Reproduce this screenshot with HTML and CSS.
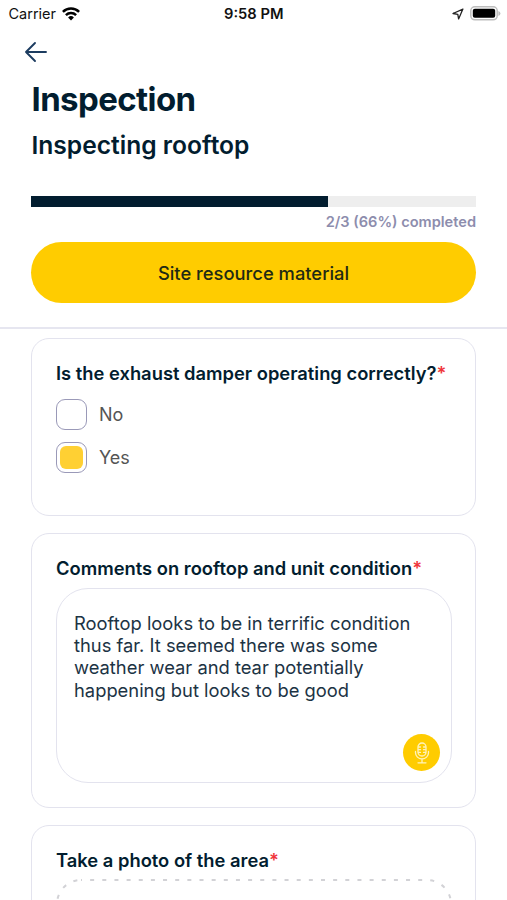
FILE: index.html
```html
<!DOCTYPE html>
<html lang="en">
<head>
  <meta charset="UTF-8" />
  <meta name="viewport" content="width=device-width, initial-scale=1.0" />
  <title>Inspection</title>
  <link rel="stylesheet" href="styles.css">
</head>
<body>
  <div class="status-bar">
    <div class="carrier">
      <span>Carrier</span>
      <svg width="18" height="14" viewBox="0 0 18 14" fill="none" stroke="#000" stroke-width="2.5">
        <path d="M0.9 4.9a11.5 11.5 0 0 1 16.2 0"/>
        <path d="M3.9 8.1a7.3 7.3 0 0 1 10.2 0"/>
        <path d="M9 13.6l-2.9-3.1a4.2 4.2 0 0 1 5.8 0z" fill="#000" stroke="none"/>
      </svg>
    </div>
    <div class="time">9:58 PM</div>
    <div class="indicators">
      <svg width="12" height="12" viewBox="0 0 12 12" fill="none" stroke="#222" stroke-width="1.3" stroke-linejoin="round">
        <path d="M10.9 1.1L1 5.5l4.8.8.8 4.6z"/>
      </svg>
      <svg width="31" height="15" viewBox="0 0 31 15">
        <rect x="0.8" y="0.8" width="26.4" height="13" rx="4" fill="#fff" stroke="#bdbdbd" stroke-width="1.5"/>
        <rect x="2.8" y="2.8" width="22.4" height="9" rx="2" fill="#000"/>
        <path d="M28.4 5v5q2-.8 2-2.5t-2-2.5z" fill="#bdbdbd"/>
      </svg>
    </div>
  </div>

  <header class="header">
    <a class="back" href="#" aria-label="Back">
      <svg width="24" height="22" viewBox="0 0 24 22" fill="none" stroke="#1c3c60" stroke-width="1.9" stroke-linecap="round" stroke-linejoin="round">
        <path d="M22 11H2M11 2L2 11l9 9"/>
      </svg>
    </a>
    <h1>Inspection</h1>
    <h2>Inspecting rooftop</h2>
    <div class="progress"><div class="progress-fill" style="width: 66.7%"></div></div>
    <p class="progress-text">2/3 (66%) completed</p>
    <button class="resource-btn" type="button">Site resource material</button>
  </header>

  <main class="questions">
    <section class="card card-choice">
      <h3>Is the exhaust damper operating correctly?<span class="required">*</span></h3>
      <div class="option"><span class="box"></span>No</div>
      <div class="option"><span class="box checked"></span>Yes</div>
    </section>

    <section class="card card-comments">
      <h3>Comments on rooftop and unit condition<span class="required">*</span></h3>
      <div class="comment">
        <p>Rooftop looks to be in terrific condition<br>thus far. It seemed there was some<br>weather wear and tear potentially<br>happening but looks to be good</p>
        <button class="mic" type="button" aria-label="Dictate">
          <svg width="16" height="22" viewBox="0 0 16 22" fill="none" stroke="#fff3bd" stroke-width="1.3" stroke-linecap="round">
            <rect x="4" y="1" width="8" height="13" rx="4"/>
            <path d="M1.5 9.5v1.2a6.5 6.3 0 0 0 13 0V9.5M8 17v3.5M4 20.8h8"/>
            <path d="M4.5 5h2M9.5 5h2M4.5 7.7h2M9.5 7.7h2M4.5 10.4h2M9.5 10.4h2"/>
          </svg>
        </button>
      </div>
    </section>

    <section class="card card-photo">
      <h3>Take a photo of the area<span class="required">*</span></h3>
      <svg class="dropzone" width="396" height="160" viewBox="0 0 396 160" fill="none">
        <rect x="1" y="1" width="394" height="158" rx="24" stroke="#d2d2d6" stroke-width="2" stroke-dasharray="4 8.15" stroke-dashoffset="3"/>
      </svg>
    </section>
  </main>
</body>
</html>
```
FILE: styles.css
```css
* {
  box-sizing: border-box;
}
body {
  margin: 0;
  height: 900px;
  overflow: hidden;
  background-color: #fff;
  color: #021d2f;
  font-family: Inter, 'Liberation Sans', sans-serif;
}
h1, h2, h3, p {
  margin: 0;
}
button {
  border: none;
  font-family: inherit;
  cursor: pointer;
}
svg {
  display: block;
}
.status-bar {
  display: grid;
  grid-template-columns: 1fr auto 1fr;
  align-items: center;
  height: 27px;
  padding: 0 6px 0 8.5px;
  color: #111;
  font-size: 14.5px;
}
.carrier, .indicators {
  display: flex;
  align-items: center;
  gap: 6px;
}
.indicators {
  justify-content: flex-end;
}
.time {
  margin-left: -2px;
  font-size: 14.7px;
  font-weight: 600;
}
.header {
  height: 302px;
  padding: 14px 31px 0;
  border-bottom: 2px solid #e6e6f0;
}
.back {
  display: block;
  width: 24px;
  margin-left: -7px;
}
h1 {
  margin: 16px 0 0 0.5px;
  font-size: 33px;
  line-height: 40px;
  font-weight: 700;
  letter-spacing: -0.6px;
}
h2 {
  margin: 10px 0 0 0.5px;
  font-size: 24.6px;
  line-height: 32px;
  font-weight: 600;
}
.progress {
  height: 11px;
  margin-top: 35px;
  background-color: #eee;
}
.progress-fill {
  height: 100%;
  background-color: #021d2f;
}
.progress-text {
  margin-top: 5px;
  color: #8d8dad;
  font-size: 14.6px;
  line-height: 20px;
  font-weight: 600;
  text-align: right;
}
.resource-btn {
  display: block;
  width: 100%;
  height: 61px;
  margin-top: 10px;
  padding: 0;
  border-radius: 31px;
  background-color: #fc0;
  color: #1f2a14;
  font-size: 18.35px;
  font-weight: 500;
}
.questions {
  display: flex;
  flex-direction: column;
  gap: 17px;
  height: 571px;
  padding: 9px 31px 0;
  overflow: hidden;
}
.card {
  flex: none;
  padding: 23px 23px 0 24px;
  border: 1.5px solid #e3e3ee;
  border-radius: 18px;
}
.card-choice {
  height: 178px;
}
.card-comments {
  height: 275px;
}
.card-photo {
  height: 220px;
}
h3 {
  font-size: 18.35px;
  line-height: 22px;
  font-weight: 600;
}
.required {
  color: #f0353a;
}
.option {
  display: flex;
  align-items: center;
  gap: 12px;
  height: 31px;
  margin-top: 12px;
  color: #555;
  font-size: 18px;
}
.card-choice h3 + .option {
  margin-top: 15px;
}
.box {
  width: 31px;
  height: 31px;
  padding: 3px;
  border: 1.5px solid #9a99b8;
  border-radius: 9px;
}
.checked::before {
  content: "";
  display: block;
  height: 100%;
  border-radius: 6px;
  background-color: #ffd033;
}
.comment {
  position: relative;
  height: 195px;
  margin-top: 9px;
  padding: 23px 17px;
  border: 1.5px solid #e3e3ee;
  border-radius: 32px;
  color: #1c3344;
  font-size: 18.35px;
  line-height: 22.2px;
}
.mic {
  position: absolute;
  right: 11px;
  bottom: 11px;
  display: flex;
  align-items: center;
  justify-content: center;
  width: 37px;
  height: 37px;
  padding: 0;
  border-radius: 50%;
  background-color: #fc0;
}
.dropzone {
  margin-top: 8px;
}
```
